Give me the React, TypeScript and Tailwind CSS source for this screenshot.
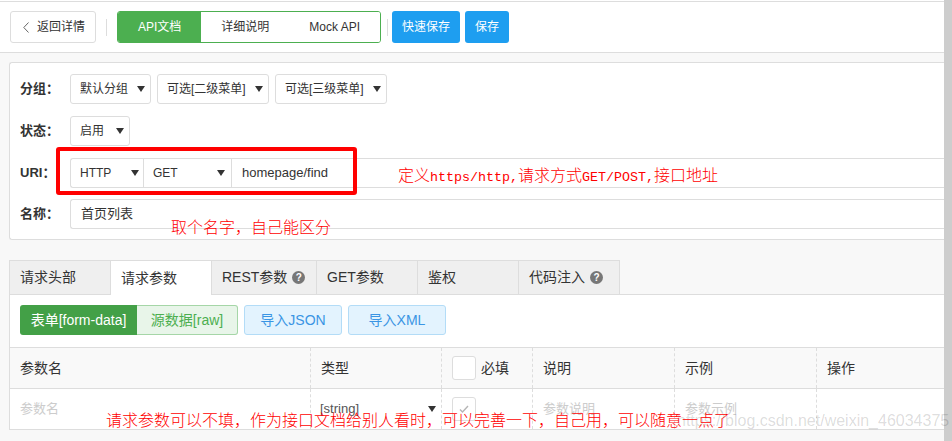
import type { ReactNode } from "react";

// ──────────────────────────────
// 공통 스타일
// ──────────────────────────────

const FONT = "font-['Liberation_Sans','Noto_Sans_CJK_SC',sans-serif]";
const RED = "font-['Noto_Sans_CJK_SC',sans-serif] font-light text-[16px] leading-[16px] text-[#ff0000]";

function Caret() {
  return (
    <svg width="8" height="6" viewBox="0 0 8 6" className="shrink-0">
      <path d="M0 0h8L4 6z" fill="#333" />
    </svg>
  );
}

function Help() {
  return (
    <span className="flex h-[13px] w-[13px] items-center justify-center rounded-full bg-[#777] text-[10px] font-bold leading-none text-white">
      ?
    </span>
  );
}

function Select({ text, width }: { text: string; width: string }) {
  return (
    <div
      className={`flex h-[30px] ${width} items-center justify-between rounded-[3px] border border-[#ddd] bg-white pl-[9px] pr-[5px] text-[12px] text-[#333]`}
    >
      <span>{text}</span>
      <Caret />
    </div>
  );
}

function Row({ label, children, className = "" }: { label: string; children: ReactNode; className?: string }) {
  return (
    <div className={`flex h-[30px] items-center ${className}`}>
      <span className="w-[50px] shrink-0 text-[13px] font-bold text-[#333]">{label}</span>
      {children}
    </div>
  );
}

function CheckBox({ checked = false }: { checked?: boolean }) {
  return (
    <span className="flex h-[24px] w-[24px] shrink-0 items-center justify-center rounded-[3px] border border-[#ddd] bg-white">
      {checked && (
        <svg width="14" height="14" viewBox="0 0 14 14">
          <path d="M3 7.5l2.5 2.5L11 4" fill="none" stroke="#b5b5b5" strokeWidth="1.4" />
        </svg>
      )}
    </span>
  );
}

// ──────────────────────────────
// 상단 툴바
// ──────────────────────────────

function Toolbar() {
  return (
    <div className="mt-px flex h-[52px] items-center border-y border-[#ddd] bg-white pl-[10px]">
      <button className="flex h-[32px] w-[86px] items-center rounded-[3px] border border-[#ddd] bg-white pl-[12px] text-[12px] text-[#333]">
        <svg width="6" height="11" viewBox="0 0 6 11">
          <path d="M5.5 0.5L0.8 5.5l4.7 5" fill="none" stroke="#666" strokeWidth="1" />
        </svg>
        <span className="ml-[8px]">返回详情</span>
      </button>
      <div className="mx-[10px] h-[17px] w-px bg-[#ddd]" />
      <div className="flex h-[32px] overflow-hidden rounded-[3px] border border-[#4caf50] text-[12px]">
        <span className="flex items-center bg-[#4caf50] px-5 text-white">API文档</span>
        <span className="flex items-center bg-white px-5 text-[#333]">详细说明</span>
        <span className="flex items-center bg-white px-5 text-[#333]">Mock API</span>
      </div>
      <div className="ml-[6px] mr-[4px] h-[17px] w-px bg-[#ddd]" />
      <button className="h-[32px] rounded-[3px] bg-[#1e9ef0] px-[10px] text-[12px] text-white">快速保存</button>
      <button className="ml-[5px] h-[32px] rounded-[3px] bg-[#1e9ef0] px-[10px] text-[12px] text-white">保存</button>
    </div>
  );
}

// ──────────────────────────────
// 기본 정보 (分组 / 状态 / URI / 名称)
// ──────────────────────────────

function BasicInfo() {
  return (
    <div className="ml-[9px] rounded-l-[3px] border border-r-0 border-[#ddd] bg-white pb-[10px] pl-[10px] pt-[11px]">
      <Row label="分组：">
        <Select text="默认分组" width="w-[81px]" />
        <div className="ml-[6px]">
          <Select text="可选[二级菜单]" width="w-[112px]" />
        </div>
        <div className="ml-[6px]">
          <Select text="可选[三级菜单]" width="w-[112px]" />
        </div>
      </Row>
      <Row label="状态：" className="mt-[12px]">
        <Select text="启用" width="w-[60px]" />
      </Row>
      <Row label="URI：" className="mt-[12px]">
        <div className="flex h-[30px] flex-1 rounded-l-[3px] border border-r-0 border-[#ddd] text-[12px] text-[#333]">
          <div className="flex w-[73px] items-center justify-between border-r border-[#ddd] pl-[9px] pr-[4px]">
            <span>HTTP</span>
            <Caret />
          </div>
          <div className="flex w-[88px] items-center justify-between border-r border-[#ddd] pl-[9px] pr-[6px]">
            <span>GET</span>
            <Caret />
          </div>
          <div className="flex flex-1 items-center pl-[10px] text-[13px]">homepage/find</div>
        </div>
      </Row>
      <Row label="名称：" className="mt-[11px]">
        <div className="flex h-[30px] flex-1 items-center rounded-l-[3px] border border-r-0 border-[#ddd] pl-[10px] text-[13px] text-[#333]">
          首页列表
        </div>
      </Row>
    </div>
  );
}

// ──────────────────────────────
// 요청 파라미터 탭
// ──────────────────────────────

const TABS = [
  { label: "请求头部", width: "w-[101px]" },
  { label: "请求参数", width: "w-[101px]", active: true },
  { label: "REST参数", width: "w-[105px]", help: true },
  { label: "GET参数", width: "w-[101px]" },
  { label: "鉴权", width: "w-[101px]" },
  { label: "代码注入", width: "w-[102px]", help: true, last: true },
];

function ParamsPanel() {
  return (
    <>
      <div className="ml-[9px] mt-[20px] flex">
        {TABS.map((t) => (
          <div
            key={t.label}
            className={`flex h-[35px] ${t.width} items-center gap-[5px] border-l border-t border-[#ddd] pl-[10px] text-[14px] text-[#333] ${
              t.active ? "bg-white" : "border-b bg-[#efefef]"
            } ${t.last ? "border-r" : ""}`}
          >
            <span>{t.label}</span>
            {t.help && <Help />}
          </div>
        ))}
        <div className="flex-1 border-b border-[#ddd]" />
      </div>

      <div className="ml-[9px] border-b border-l border-[#ddd] bg-white pt-[10px]">
        {/* 입력 방식 버튼 */}
        <div className="flex h-[30px] pl-[10px] text-[14px]">
          <span className="flex w-[117px] items-center justify-center rounded-l-[3px] bg-[#43a047] text-white">
            表单[form-data]
          </span>
          <span className="flex w-[101px] items-center justify-center rounded-r-[3px] border border-l-0 border-[#a5d6a7] bg-[#e8f5e9] text-[#4caf50]">
            源数据[raw]
          </span>
          <span className="ml-[6px] flex w-[98px] items-center justify-center rounded-[3px] border border-[#b3dcf7] bg-[#e3f3fe] text-[#3a95e4]">
            导入JSON
          </span>
          <span className="ml-[6px] flex w-[98px] items-center justify-center rounded-[3px] border border-[#b3dcf7] bg-[#e3f3fe] text-[#3a95e4]">
            导入XML
          </span>
        </div>

        {/* 파라미터 테이블 */}
        <div className="mt-[12px] border-t border-[#ddd]">
          <div className="flex h-[41px] border-b border-[#ddd] bg-[#f9f9f9] text-[14px] text-[#333]">
            <div className="flex w-[301px] items-center border-r border-dashed border-[#ddd] pl-[10px]">参数名</div>
            <div className="flex w-[131px] items-center border-r border-dashed border-[#ddd] pl-[10px]">类型</div>
            <div className="flex w-[91px] items-center gap-[5px] border-r border-dashed border-[#ddd] pl-[10px]">
              <CheckBox />
              <span>必填</span>
            </div>
            <div className="flex w-[142px] items-center border-r border-dashed border-[#ddd] pl-[10px]">说明</div>
            <div className="flex w-[142px] items-center border-r border-dashed border-[#ddd] pl-[10px]">示例</div>
            <div className="flex flex-1 items-center pl-[10px]">操作</div>
          </div>
          <div className="flex h-[40px] text-[13px] text-[#ccc]">
            <div className="flex w-[301px] items-center border-r border-dashed border-[#ddd] pl-[10px]">参数名</div>
            <div className="flex w-[131px] items-center justify-between border-r border-dashed border-[#ddd] pl-[9px] pr-[5px] text-[#555]">
              <span>[string]</span>
              <Caret />
            </div>
            <div className="flex w-[91px] items-center border-r border-dashed border-[#ddd] pl-[10px]">
              <CheckBox checked />
            </div>
            <div className="flex w-[142px] items-center border-r border-dashed border-[#ddd] pl-[10px]">参数说明</div>
            <div className="flex w-[142px] items-center border-r border-dashed border-[#ddd] pl-[10px]">参数示例</div>
            <div className="flex-1" />
          </div>
        </div>
      </div>
    </>
  );
}

// ──────────────────────────────
// 페이지
// ──────────────────────────────

export default function App() {
  return (
    <div className={`relative flex h-[441px] w-[952px] overflow-hidden bg-white ${FONT}`}>
      <div className="flex w-[944px] flex-col">
        <Toolbar />
        <div className="flex-1 bg-[#f8f8f8] pt-[9px]">
          <BasicInfo />
          <ParamsPanel />
        </div>
      </div>
      <div className="w-[8px] bg-[#cdcdcd]" />

      {/* 주석 표시 (빨간 박스 / 설명) */}
      <div className="absolute left-[56px] top-[147px] h-[48px] w-[301px] rounded-[3px] border-4 border-[#ff0000]" />
      <div className={`absolute left-[398px] top-[166px] whitespace-nowrap ${RED}`}>
        定义<span className="font-['Liberation_Mono',monospace] text-[13.33px] font-normal">https/http,</span>请求方式
        <span className="font-['Liberation_Mono',monospace] text-[13.33px] font-normal">GET/POST,</span>接口地址
      </div>
      <div className={`absolute left-[171px] top-[218px] whitespace-nowrap ${RED}`}>取个名字，自己能区分</div>
      <div className="absolute left-[677px] top-[411px] whitespace-nowrap text-[16px] leading-[20px] text-black/15">
        https://blog.csdn.net/weixin_46034375
      </div>
      <div className={`absolute left-[106px] top-[411px] whitespace-nowrap ${RED}`}>
        请求参数可以不填，作为接口文档给别人看时，可以完善一下，自己用，可以随意一点了
      </div>
    </div>
  );
}
